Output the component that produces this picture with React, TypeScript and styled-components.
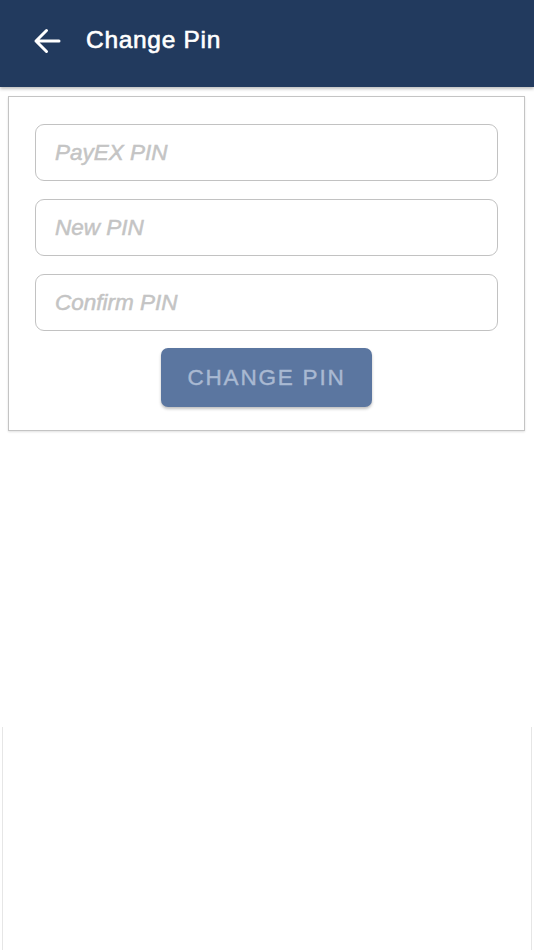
import React from 'react'
import styled, { createGlobalStyle } from 'styled-components'

const GlobalStyle = createGlobalStyle`
  html, body {
    margin: 0;
    padding: 0;
    background: #fff;
  }
  body {
    font-family: 'Liberation Sans', Arial, Helvetica, sans-serif;
  }
`

const Page = styled.div`
  width: 534px;
  min-height: 950px;
  display: flex;
  flex-direction: column;
  background: #fff;
`

const Header = styled.header`
  box-sizing: border-box;
  height: 87px;
  padding: 0 0 5px 31px;
  background: #223a5e;
  display: flex;
  align-items: center;
  gap: 24px;
  box-shadow: 0 2px 3px rgba(0, 0, 0, 0.25);
  position: relative;
  z-index: 1;
`

const BackButton = styled.button`
  border: 0;
  background: none;
  padding: 0;
  width: 31px;
  height: 30px;
  display: flex;
  align-items: center;
  justify-content: center;
  color: #fff;
  cursor: pointer;
`

// Helvetica Medium look: regular face with a thin stroke
const Title = styled.h1`
  margin: 0 0 2px;
  color: #fff;
  font-family: 'Liberation Sans', Arial, sans-serif;
  font-size: 24.5px;
  font-weight: 400;
  letter-spacing: 0.7px;
  -webkit-text-stroke: 0.6px #fff;
`

const Body = styled.main`
  padding: 9px 9px 0 8px;
`

const Card = styled.form`
  border: 1px solid #c4c4c4;
  box-shadow: 0 1px 2px rgba(0, 0, 0, 0.12);
  padding: 27px 26px 23px 26px;
  display: flex;
  flex-direction: column;
  gap: 18px;
`

const Field = styled.input`
  box-sizing: border-box;
  height: 57px;
  width: 100%;
  border: 1.5px solid #c2c2c2;
  border-radius: 9px;
  padding: 0 19px;
  font-family: 'Liberation Sans', Arial, sans-serif;
  font-size: 22.5px;
  font-style: italic;
  font-weight: 400;
  color: #444;
  outline: none;
  background: #fff;
  -webkit-text-stroke: 0.5px #c4c4c4;

  &::placeholder {
    color: #c4c4c4;
    font-style: italic;
  }
`

const SubmitRow = styled.div`
  display: flex;
  justify-content: center;
  margin-top: -1px;
`

const SubmitButton = styled.button`
  width: 211px;
  height: 59px;
  border: 0;
  border-radius: 7px;
  background: #5b76a0;
  color: #a9b9d2;
  font-family: 'Liberation Sans', Arial, sans-serif;
  font-size: 22.5px;
  font-weight: 400;
  letter-spacing: 1.8px;
  text-transform: uppercase;
  -webkit-text-stroke: 0.4px #a9b9d2;
  box-shadow: 0 2px 3px rgba(0, 0, 0, 0.25);
  cursor: default;
`

const Spacer = styled.div`
  height: 296px;
`

const LowerFrame = styled.div`
  flex: 1;
  margin: 0 2px;
  border-left: 1.5px solid #e6e6e6;
  border-right: 1.5px solid #e6e6e6;
`

const ArrowLeft = () => (
  <svg width="28" height="26" viewBox="0 0 28 26" fill="none">
    <path
      d="M26 13H3M13.5 2.5L3 13l10.5 10.5"
      stroke="currentColor"
      strokeWidth="3"
      strokeLinecap="round"
      strokeLinejoin="round"
    />
  </svg>
)

const fields = ['PayEX PIN', 'New PIN', 'Confirm PIN']

export default function App() {
  return (
    <Page>
      <GlobalStyle />
      <Header>
        <BackButton aria-label="back">
          <ArrowLeft />
        </BackButton>
        <Title>Change Pin</Title>
      </Header>
      <Body>
        <Card onSubmit={(e) => e.preventDefault()}>
          {fields.map((f) => (
            <Field key={f} type="password" placeholder={f} />
          ))}
          <SubmitRow>
            <SubmitButton type="submit">Change Pin</SubmitButton>
          </SubmitRow>
        </Card>
      </Body>
      <Spacer />
      <LowerFrame />
    </Page>
  )
}
